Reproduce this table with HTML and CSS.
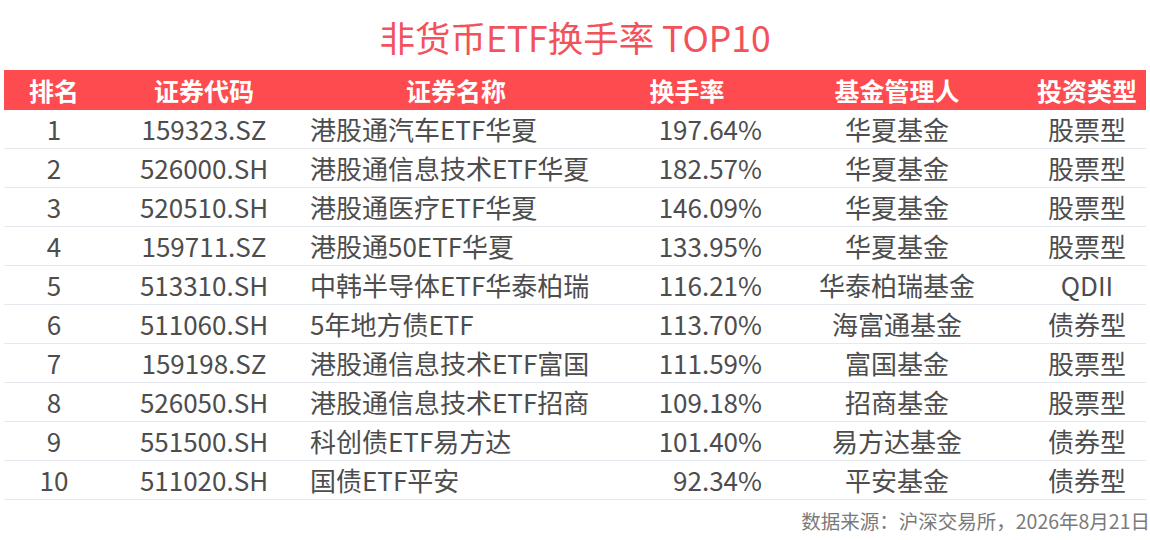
FILE: index.html
```html
<!DOCTYPE html>
<html lang="zh-CN">
<head>
<meta charset="utf-8">
<title>非货币ETF换手率 TOP10</title>
<link rel="stylesheet" href="styles.css">
</head>
<body>
<div class="page">
  <h1 class="title">非货币ETF换手率 TOP10</h1>
  <div class="table">
    <div class="row head">
      <div class="c c1">排名</div>
      <div class="c c2">证券代码</div>
      <div class="c c3h">证券名称</div>
      <div class="c c4h">换手率</div>
      <div class="c c5">基金管理人</div>
      <div class="c c6">投资类型</div>
    </div>
    <div class="row"><div class="c c1">1</div><div class="c c2">159323.SZ</div><div class="c c3">港股通汽车ETF华夏</div><div class="c c4">197.64%</div><div class="c c5">华夏基金</div><div class="c c6">股票型</div></div>
    <div class="row"><div class="c c1">2</div><div class="c c2">526000.SH</div><div class="c c3">港股通信息技术ETF华夏</div><div class="c c4">182.57%</div><div class="c c5">华夏基金</div><div class="c c6">股票型</div></div>
    <div class="row"><div class="c c1">3</div><div class="c c2">520510.SH</div><div class="c c3">港股通医疗ETF华夏</div><div class="c c4">146.09%</div><div class="c c5">华夏基金</div><div class="c c6">股票型</div></div>
    <div class="row"><div class="c c1">4</div><div class="c c2">159711.SZ</div><div class="c c3">港股通50ETF华夏</div><div class="c c4">133.95%</div><div class="c c5">华夏基金</div><div class="c c6">股票型</div></div>
    <div class="row"><div class="c c1">5</div><div class="c c2">513310.SH</div><div class="c c3">中韩半导体ETF华泰柏瑞</div><div class="c c4">116.21%</div><div class="c c5">华泰柏瑞基金</div><div class="c c6">QDII</div></div>
    <div class="row"><div class="c c1">6</div><div class="c c2">511060.SH</div><div class="c c3">5年地方债ETF</div><div class="c c4">113.70%</div><div class="c c5">海富通基金</div><div class="c c6">债券型</div></div>
    <div class="row"><div class="c c1">7</div><div class="c c2">159198.SZ</div><div class="c c3">港股通信息技术ETF富国</div><div class="c c4">111.59%</div><div class="c c5">富国基金</div><div class="c c6">股票型</div></div>
    <div class="row"><div class="c c1">8</div><div class="c c2">526050.SH</div><div class="c c3">港股通信息技术ETF招商</div><div class="c c4">109.18%</div><div class="c c5">招商基金</div><div class="c c6">股票型</div></div>
    <div class="row"><div class="c c1">9</div><div class="c c2">551500.SH</div><div class="c c3">科创债ETF易方达</div><div class="c c4">101.40%</div><div class="c c5">易方达基金</div><div class="c c6">债券型</div></div>
    <div class="row"><div class="c c1">10</div><div class="c c2">511020.SH</div><div class="c c3">国债ETF平安</div><div class="c c4">92.34%</div><div class="c c5">平安基金</div><div class="c c6">债券型</div></div>
  </div>
  <div class="source">数据来源：沪深交易所，2026年8月21日</div>
</div>
</body>
</html>
```

FILE: styles.css
```css
html, body {
  margin: 0;
  padding: 0;
  background: #ffffff;
}

body {
  font-family: "Noto Sans CJK SC", "Noto Sans", sans-serif;
  color: #4d4d4d;
}

.page {
  width: 1150px;
}

.title {
  margin: 0;
  padding: 14px 0 10px;
  line-height: 46px;
  font-size: 35.5px;
  font-weight: 400;
  color: #f2525a;
  text-align: center;
}

.table {
  margin: 0 4px;
  width: 1142px;
}

.row {
  display: grid;
  grid-template-columns: 100px 200px 304px 158px 262px 118px;
  height: 38px;
  line-height: 38px;
  font-size: 26px;
  border-bottom: 1px solid #e6e8f0;
  white-space: nowrap;
}

.row.head {
  height: 40px;
  line-height: 40px;
  background: #fd4b50;
  color: #ffffff;
  font-weight: 700;
  font-size: 25px;
  border-bottom: none;
}

.c1, .c2, .c3h, .c4h, .c5, .c6 {
  text-align: center;
}

.c3 {
  text-align: left;
  padding-left: 6px;
}

.c4 {
  text-align: right;
  padding-right: 4px;
}

.source {
  margin-top: 7px;
  line-height: 28px;
  font-size: 19.5px;
  color: #7a7a7a;
  text-align: right;
}
```
